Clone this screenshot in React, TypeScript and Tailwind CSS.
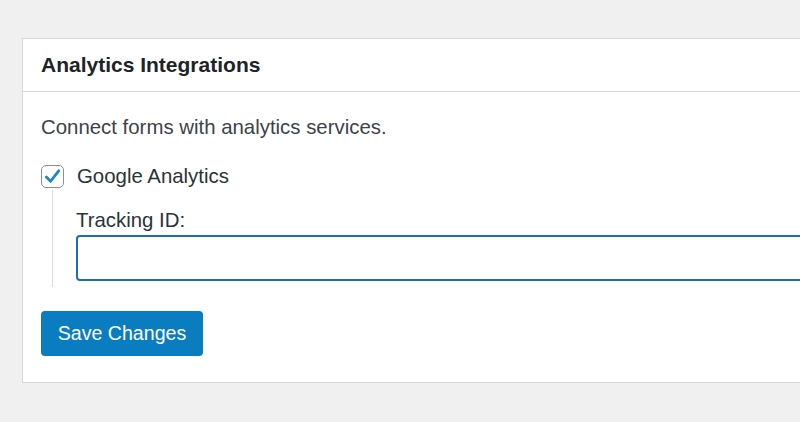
export default function App() {
  return (
    <div className="min-h-[422px] w-[800px] overflow-hidden bg-[#f0f0f1] pt-[38px] pl-[22px] font-['Liberation_Sans',Arial,sans-serif]">
      <div className="w-[820px] border border-[#d7d8da] bg-white">
        <div className="flex h-[53px] items-center border-b border-[#d7d8da] pl-[18px]">
          <h2 className="text-[21px] font-bold text-[#1d2327]">Analytics Integrations</h2>
        </div>
        <div className="pt-[23px] pb-[26px] pl-[18px]">
          <p className="text-[20.4px] leading-[24px] text-[#3c434a]">Connect forms with analytics services.</p>

          <label className="mt-[26px] flex h-[23px] items-center gap-[13px]">
            <span className="flex h-[23px] w-[23px] items-center justify-center rounded-[5px] border-[1.5px] border-[#8c8f94] bg-white">
              <svg viewBox="0 0 20 20" className="h-[19px] w-[19px]">
                <path d="M3.5 10.5 L8 15 L16.5 4" fill="none" stroke="#1f85c4" strokeWidth="3" strokeLinecap="round" strokeLinejoin="round" />
              </svg>
            </span>
            <span className="text-[20.4px] text-[#2c3338]">Google Analytics</span>
          </label>

          <div className="mt-[2px] ml-[11px] border-l border-[#dcdcde] pt-[18px] pb-[6px] pl-[23px]">
            <div className="text-[20.4px] leading-[24px] text-[#2c3338]">Tracking ID:</div>
            <input
              type="text"
              className="mt-[3px] block h-[46px] w-[760px] rounded-[4px] border-2 border-[#1f6ea8] bg-white px-3 outline-none"
            />
          </div>

          <button className="mt-[24px] h-[45px] w-[162px] rounded-[4px] bg-[#0a7cc0] text-[19.6px] text-white">
            Save Changes
          </button>
        </div>
      </div>
    </div>
  );
}
